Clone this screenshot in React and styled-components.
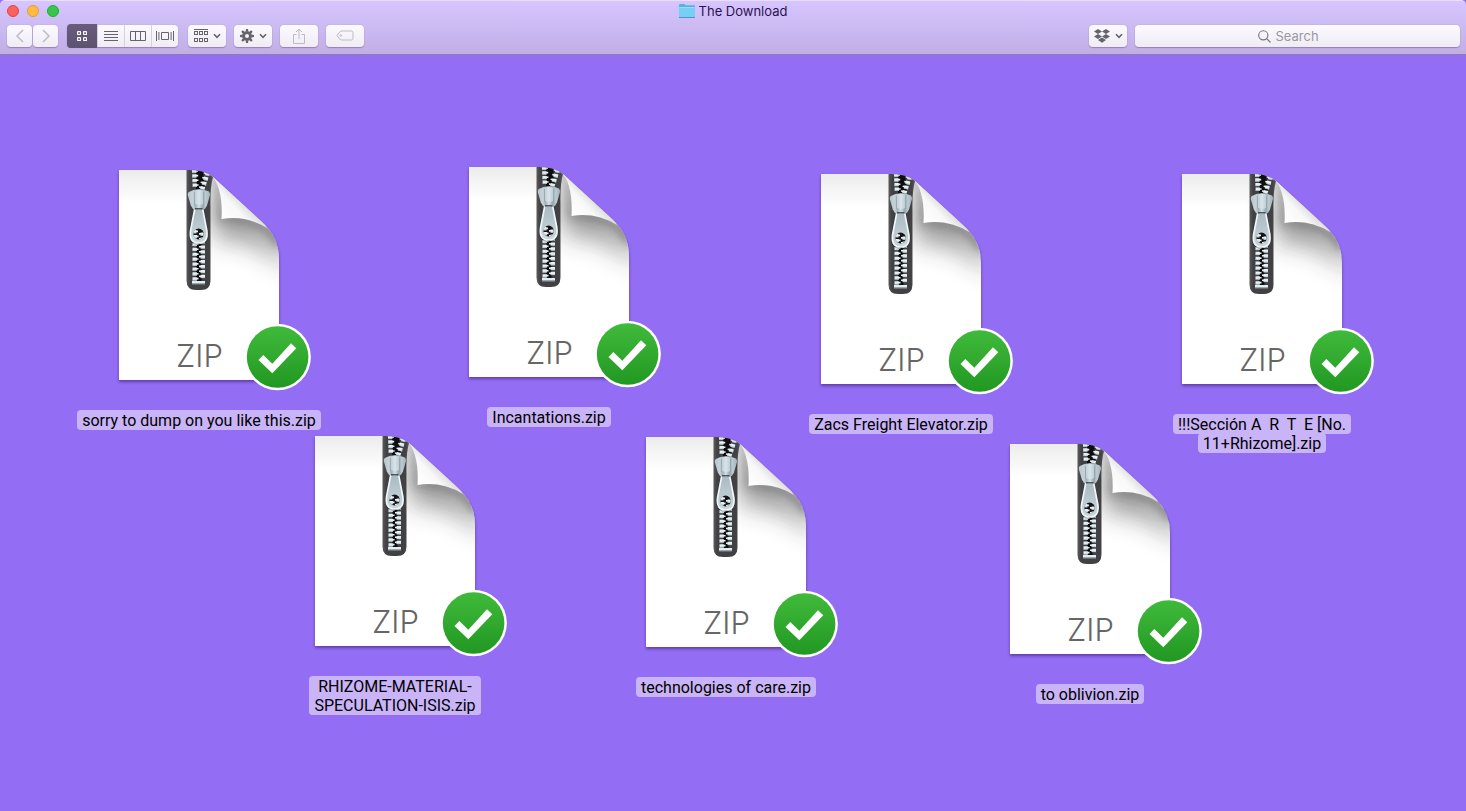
import React from "react";
import styled, { createGlobalStyle, css } from "styled-components";

const GlobalStyle = createGlobalStyle`
  *, *::before, *::after { box-sizing: border-box; }
  body {
    margin: 0;
    background: #936df3;
    font-family: Inter, "Liberation Sans", sans-serif;
    font-size: 13px;
  }
`;

const Window = styled.div`
  display: flex;
  flex-direction: column;
  min-height: 100vh;
  overflow: hidden;
`;

const TopBar = styled.header`
  display: flex;
  flex-direction: column;
  height: 55px;
  background: linear-gradient(#d7c5ff, #c0aee5);
  border-top: 1px solid #e9dffc;
  border-bottom: 1px solid #8c7da9;
  border-radius: 5px 5px 0 0;
`;

const TitleRow = styled.div`
  display: grid;
  grid-template-columns: 1fr auto 1fr;
  align-items: center;
  height: 20px;
  padding: 0 7px;
`;

const Lights = styled.div`
  display: flex;
  gap: 8px;
`;

const Light = styled.button`
  width: 12px;
  height: 12px;
  padding: 0;
  border: 1px solid ${(p) => p.$edge};
  border-radius: 50%;
  background: ${(p) => p.$fill};
`;

const Title = styled.h1`
  display: flex;
  align-items: center;
  gap: 4px;
  margin: 0;
  font-size: 13px;
  line-height: 20px;
  font-weight: 400;
  color: #2c1250;
`;

const Tools = styled.div`
  display: flex;
  justify-content: space-between;
  gap: 8px;
  padding: 4px 6px 0 7px;
`;

const ToolSide = styled.div`
  display: flex;
  gap: ${(p) => p.$gap}px;
`;

const face = css`
  background: linear-gradient(#fcfaff, #efecf4);
  box-shadow: 0 0 1px #9a89bb, 0 1px 1px rgba(90, 70, 130, 0.45);
`;

const ToolButton = styled.button`
  ${face}
  display: flex;
  align-items: center;
  justify-content: center;
  gap: 5px;
  width: ${(p) => p.$width || 38}px;
  height: 22px;
  padding: 0;
  border: 0;
  border-radius: 4px;
  color: ${(p) => (p.disabled ? "#bdbac2" : "#66636b")};
`;

const Segments = styled.div`
  ${face}
  display: flex;
  height: 22px;
  margin-right: 1px;
  border-radius: 4px;
`;

const Segment = styled.button`
  display: flex;
  align-items: center;
  justify-content: center;
  width: 27px;
  padding: 0;
  border: 0;
  border-left: 1px solid #d5d0de;
  background: none;
  color: #66636b;

  &[aria-pressed="true"] {
    width: 30px;
    height: 24px;
    margin-top: -1px;
    border: 0;
    border-radius: 4px 0 0 4px;
    background: linear-gradient(#685b7c, #5e5271);
    color: #fff;
  }
`;

const SearchBox = styled.label`
  ${face}
  display: flex;
  align-items: center;
  justify-content: center;
  gap: 5px;
  width: 325px;
  height: 22px;
  padding-right: 18px;
  border-radius: 4px;
  color: #77747c;
`;

const SearchInput = styled.input`
  field-sizing: content;
  min-width: 44px;
  max-width: 280px;
  padding: 0;
  border: 0;
  outline: 0;
  background: none;
  font: 13px/20px Inter, "Liberation Sans", sans-serif;
  color: #333;
  &::placeholder { color: #9a979e; opacity: 1; }
`;

const Desktop = styled.main`
  position: relative;
  flex: 1;
  min-height: 720px;
  background: #936df3;
`;

const File = styled.figure`
  position: absolute;
  left: calc(50% + ${(p) => p.$x}px);
  top: ${(p) => p.$y}px;
  width: 250px;
  margin: 0 0 0 -125px;
  display: flex;
  flex-direction: column;
  align-items: center;
  gap: 10px;
`;

const Art = styled.svg`
  display: block;
  width: 250px;
  height: 230px;
  overflow: visible;
`;

const Caption = styled.figcaption`
  display: flex;
  flex-direction: column;
  align-items: center;
  font-family: Roboto, "Liberation Sans", sans-serif;
  font-size: 16px;
  line-height: 19px;
  text-align: center;
  color: #000;
  ${(p) => p.$joined && css`
    background: #c9b4f8;
    border-radius: 4px;
  `}
`;

const CaptionLine = styled.span`
  padding: 1px 5px 0;
  border-radius: 4px;
  background: #c9b4f8;
  white-space: pre;
  & + & { margin-top: -1px; }
`;

const Icon = ({ w, h, children, sw = 1 }) => (
  <svg width={w} height={h} viewBox={`0 0 ${w} ${h}`} fill="none" stroke="currentColor" strokeWidth={sw} aria-hidden="true">
    {children}
  </svg>
);

const Chevron = () => (
  <Icon w={8} h={6} sw={1.6}><path d="M1 1.2 4 4.3 7 1.2" /></Icon>
);

const FolderIcon = () => (
  <svg width="16" height="16" viewBox="0 0 16 16" aria-hidden="true">
    <path d="M0 14.5V2.2q0-1.2 1-1.2h4.5l1 1.3h8.5q1 0 1 1v11.2z" fill="#54b5dc" />
    <path d="M0 4h16v10.2H0z" fill="#77d0f4" />
    <path d="M.5 4.5h15" stroke="#93def9" />
    <path d="M0 14.5h16" stroke="#5593bd" />
  </svg>
);

const GridIcon = () => (
  <Icon w={10} h={10} sw={1.2}>
    {[[0, 0], [6, 0], [0, 6], [6, 6]].map(([x, y]) => (
      <rect key={`${x}${y}`} x={x + 0.6} y={y + 0.6} width="2.9" height="2.9" rx=".4" />
    ))}
  </Icon>
);

const ListIcon = () => (
  <Icon w={14} h={10}><path d="M0 .5h14M0 3.5h14M0 6.5h14M0 9.5h14" /></Icon>
);

const ColumnsIcon = () => (
  <Icon w={16} h={10}><path d="M.5.5h15v9H.5zM5.5.5v9M10.5.5v9" /></Icon>
);

const CoverIcon = () => (
  <Icon w={18} h={10}><path d="M.5 0v10M2.9 1v8M15.1 1v8M17.5 0v10M5.5 1.5h7v7h-7z" /></Icon>
);

const ArrangeIcon = () => (
  <Icon w={14} h={14}>
    <path d="M0 .5h14" />
    {[3, 10].map((y) => [0.5, 5.5, 10.5].map((x) => (
      <rect key={`${x}-${y}`} x={x} y={y - 0.5} width="3" height="3" />
    )))}
  </Icon>
);

const GearIcon = () => (
  <Icon w={14} h={14}>
    <circle cx="7" cy="7" r="3.4" strokeWidth="2.8" />
    {[0, 45, 90, 135, 180, 225, 270, 315].map((a) => (
      <path key={a} d="M5.6 2.8 6 0h2l.4 2.8z" fill="currentColor" stroke="none" transform={`rotate(${a} 7 7)`} />
    ))}
  </Icon>
);

const ShareIcon = () => (
  <Icon w={12} h={16}>
    <path d="M3.5 6.5h-3v9h11v-9h-3M6 11V1M3 4l3-3 3 3" />
  </Icon>
);

const TagIcon = () => (
  <Icon w={18} h={12}>
    <path d="M5.2 1h10.3q1.5 0 1.5 1.500v6q0 1.500-1.500 1.500H5.200Q4 10 1 5.500 4 1 5.200 1z" />
    <circle cx="4.8" cy="5.5" r=".8" />
  </Icon>
);

const DropboxIcon = () => (
  <svg width="16" height="14" viewBox="0 0 16 14" fill="currentColor" aria-hidden="true">
    <path d="M4 0 8 2.5 4 5 0 2.5zM12 0l4 2.5L12 5 8 2.5zM4 5l4 2.5L4 10 0 7.5zM12 5l4 2.5-4 2.5-4-2.5zM8 8.6l4 2.5-4 2.6-4-2.6z" />
  </svg>
);

const SearchIcon = () => (
  <Icon w={13} h={13} sw={1.1}><circle cx="5.3" cy="5.3" r="4.6" /><path d="m8.7 8.7 3.8 3.8" /></Icon>
);

const PAPER =
  "M0 0H70Q85 0 94 7L143 52Q160 67 160 89V210H0Z";

const ArtDefs = () => (
  <svg width="0" height="0" style={{ position: "absolute" }} aria-hidden="true">
    <defs>
      <clipPath id="sheet"><path d={PAPER} /></clipPath>
      <clipPath id="pullHole"><ellipse cx="79.5" cy="64" rx="5.2" ry="5.4" /></clipPath>
      <linearGradient id="sheetFill" x1="0" y1="0" x2="0" y2="1">
        <stop offset="0" stopColor="#ececec" />
        <stop offset=".16" stopColor="#fff" />
      </linearGradient>
      <linearGradient id="curl" gradientUnits="userSpaceOnUse" x1="103" y1="48" x2="123" y2="29">
        <stop offset="0" stopColor="#fff" />
        <stop offset=".6" stopColor="#f8f8f8" />
        <stop offset="1" stopColor="#dadadc" />
      </linearGradient>
      <linearGradient id="tape" x1="0" y1="0" x2="1" y2="0">
        <stop offset="0" stopColor="#5a5a5c" />
        <stop offset=".14" stopColor="#414144" />
        <stop offset=".86" stopColor="#414144" />
        <stop offset="1" stopColor="#59595b" />
      </linearGradient>
      <linearGradient id="metal" x1="0" y1="0" x2="1" y2="0">
        <stop offset="0" stopColor="#b9c6cc" />
        <stop offset=".24" stopColor="#c6d3d9" />
        <stop offset=".34" stopColor="#9fb0b9" />
        <stop offset=".5" stopColor="#d3dfe5" />
        <stop offset=".68" stopColor="#93a4ad" />
        <stop offset=".8" stopColor="#bccad1" />
        <stop offset="1" stopColor="#a3b2ba" />
      </linearGradient>
      <linearGradient id="pull" x1="0" y1="0" x2="0" y2="1">
        <stop offset="0" stopColor="#a9b9c1" />
        <stop offset="1" stopColor="#cbd8de" />
      </linearGradient>
      <linearGradient id="green" x1="0" y1="0" x2="0" y2="1">
        <stop offset="0" stopColor="#40ba3b" />
        <stop offset="1" stopColor="#219822" />
      </linearGradient>
      <linearGradient id="edgeShade" gradientUnits="userSpaceOnUse" x1="96" y1="56" x2="150" y2="62">
        <stop offset="0" stopColor="#333" stopOpacity=".3" />
        <stop offset="1" stopColor="#333" stopOpacity=".8" />
      </linearGradient>
      <filter id="tight" filterUnits="userSpaceOnUse" x="40" y="-40" width="180" height="200"><feGaussianBlur stdDeviation="4" /></filter>
      <filter id="wide" filterUnits="userSpaceOnUse" x="40" y="-40" width="180" height="200"><feGaussianBlur stdDeviation="13" /></filter>
      <filter id="cast" x="-10%" y="-10%" width="120%" height="125%">
        <feDropShadow dx="0" dy="2" stdDeviation="1.6" floodColor="#24104f" floodOpacity=".45" />
      </filter>
      <g id="tooth">
        <path d="M0 0h4.400v.6h1.600v1.600h-1.600v1H0z" fill="#e6f0f4" />
        <path d="M0 2.900h4.400" stroke="#a9bac2" strokeWidth=".7" />
      </g>
    </defs>
  </svg>
);

const lowerTeeth = Array.from({ length: 9 }, (_, i) => 68 + i * 4.9);

function ZipArt() {
  return (
    <Art viewBox="-45 0 250 230" role="img" aria-label="ZIP archive">
      <path d={PAPER} fill="url(#sheetFill)" filter="url(#cast)" />
      <g clipPath="url(#sheet)">
        <path d="M94 5L150 54L180 100L150 84Q128 66 97 70L92 40Z" fill="#333" opacity=".5" filter="url(#wide)" />
        <path d="M94 4Q102 18 102 48Q127 46 148 59L162 76" fill="none" stroke="url(#edgeShade)" strokeWidth="7" opacity=".65" filter="url(#tight)" />
        <path d="M67.500 -4H86L94 7Q91 18 91.500 36V110.500Q91.500 120 82 120H77Q67.500 120 67.500 110.500Z" fill="url(#tape)" />
        <path d="M77 0h7l2 20h-9zM77 66h5.500v46h-5.500z" fill="#0e0e10" />
        {[-0.5, 4.2, 8.9, 13.6].map((y, i) => (
          <g key={y}>
            <use href="#tooth" x={73 + i * 0.2} y={y} />
            <use href="#tooth" transform={`translate(${91 - i * 1.6} ${y + 3.4}) rotate(14) scale(-1 1)`} />
          </g>
        ))}
        {lowerTeeth.map((y) => (
          <g key={y}>
            <use href="#tooth" x="73.500" y={y} />
            <use href="#tooth" transform={`translate(86 ${y - 2.4}) scale(-1 1)`} />
          </g>
        ))}
        <path d="M73 111h13v3.200H73z" fill="#e3edf1" />
        <path d="M73 113.600h13" stroke="#8fa1aa" />
      </g>
      <path d="M75.800 38.500H83.600L88.300 61Q90 74 79.700 74T71 61Z" fill="#18181a" opacity=".35" stroke="#18181a" strokeWidth="2" />
      <path d="M75.800 38.500H83.600L87.900 61Q89.300 73 79.700 73T71.500 61Z" fill="url(#pull)" stroke="#f1f6f8" strokeWidth="1.700" />
      <ellipse cx="79.600" cy="64" rx="5.200" ry="5.400" fill="#161618" />
      <g clipPath="url(#pullHole)">
        <use href="#tooth" x="73" y="60" />
        <use href="#tooth" x="73.500" y="65" />
        <use href="#tooth" transform="translate(86 62.500) scale(-1 1)" />
        <use href="#tooth" transform="translate(86 67.500) scale(-1 1)" />
      </g>
      <path d="M74.500 20Q80 18.500 85.500 20L90 21.500Q91.200 22.500 91 25L88 35.500L85.800 39Q79.700 41 74 39L71.800 35.500L68.800 25Q68.600 22.800 69.800 22Z" fill="url(#metal)" />
      <path d="M75.500 20.500Q80 19 84.500 20.500V34Q80 36 76 34Z" fill="#dce8ed" opacity=".6" />
      <path d="M75.500 22V35M84.500 22V35" stroke="#8999a2" strokeWidth=".8" opacity=".7" />
      <path d="M76 38.800H83.500" stroke="#33393d" strokeWidth="1.200" fill="none" />
      <path d="M94 7L143 52Q146 54.500 148 58Q127 45 102.500 49Q104 20 94 7Z" fill="url(#curl)" />
      <text x="80.500" y="197" textAnchor="middle" fontFamily="Inter, sans-serif" fontWeight="300" fontSize="31" fill="#666">ZIP</text>
      <circle cx="158.600" cy="187" r="33.300" fill="#fff" />
      <circle cx="158.600" cy="187" r="30.800" fill="url(#green)" />
      <path d="M139.500 190 144.300 185 153.300 193.800 172 173.300 177.300 178.300 153.300 203.300Z" fill="#fff" />
    </Art>
  );
}

const FILES = [
  { x: -534, y: 115, lines: ["sorry to dump on you like this.zip"] },
  { x: -184, y: 112, lines: ["Incantations.zip"] },
  { x: 168, y: 119, lines: ["Zacs Freight Elevator.zip"] },
  { x: 529, y: 119, lines: ["!!!Sección A  R  T  E [No.", "11+Rhizome].zip"] },
  { x: -338, y: 381, lines: ["RHIZOME-MATERIAL-", "SPECULATION-ISIS.zip"], joined: true },
  { x: -7, y: 382, lines: ["technologies of care.zip"] },
  { x: 357, y: 389, lines: ["to oblivion.zip"] },
];

export default function App() {
  return (
    <Window>
      <GlobalStyle />
      <ArtDefs />
      <TopBar>
        <TitleRow>
          <Lights>
            <Light $fill="#fc615c" $edge="#de4643" aria-label="Close" />
            <Light $fill="#fdbc40" $edge="#de9f34" aria-label="Minimize" />
            <Light $fill="#34c84a" $edge="#27a935" aria-label="Zoom" />
          </Lights>
          <Title><FolderIcon />The Download</Title>
        </TitleRow>
        <Tools>
          <ToolSide $gap={9}>
            <ToolSide $gap={1}>
              <ToolButton $width={25} disabled aria-label="Back">
                <Icon w={8} h={14} sw={1.5}><path d="M7 1 1 7l6 6" /></Icon>
              </ToolButton>
              <ToolButton $width={25} disabled aria-label="Forward">
                <Icon w={8} h={14} sw={1.5}><path d="m1 1 6 6-6 6" /></Icon>
              </ToolButton>
            </ToolSide>
            <Segments>
              <Segment aria-pressed="true" aria-label="Icon view"><GridIcon /></Segment>
              <Segment aria-pressed="false" aria-label="List view"><ListIcon /></Segment>
              <Segment aria-pressed="false" aria-label="Column view"><ColumnsIcon /></Segment>
              <Segment aria-pressed="false" aria-label="Cover flow"><CoverIcon /></Segment>
            </Segments>
            <ToolSide $gap={8}>
              <ToolButton aria-label="Arrange"><ArrangeIcon /><Chevron /></ToolButton>
              <ToolButton aria-label="Actions"><GearIcon /><Chevron /></ToolButton>
              <ToolButton disabled aria-label="Share"><ShareIcon /></ToolButton>
              <ToolButton disabled aria-label="Tags"><TagIcon /></ToolButton>
            </ToolSide>
          </ToolSide>
          <ToolSide $gap={8}>
            <ToolButton aria-label="Dropbox"><DropboxIcon /><Chevron /></ToolButton>
            <SearchBox>
              <SearchIcon />
              <SearchInput type="text" placeholder="Search" aria-label="Search" />
            </SearchBox>
          </ToolSide>
        </Tools>
      </TopBar>
      <Desktop>
        {FILES.map((f) => (
          <File key={f.lines[0]} $x={f.x} $y={f.y}>
            <ZipArt />
            <Caption $joined={f.joined}>
              {f.lines.map((line) => <CaptionLine key={line}>{line}</CaptionLine>)}
            </Caption>
          </File>
        ))}
      </Desktop>
    </Window>
  );
}
